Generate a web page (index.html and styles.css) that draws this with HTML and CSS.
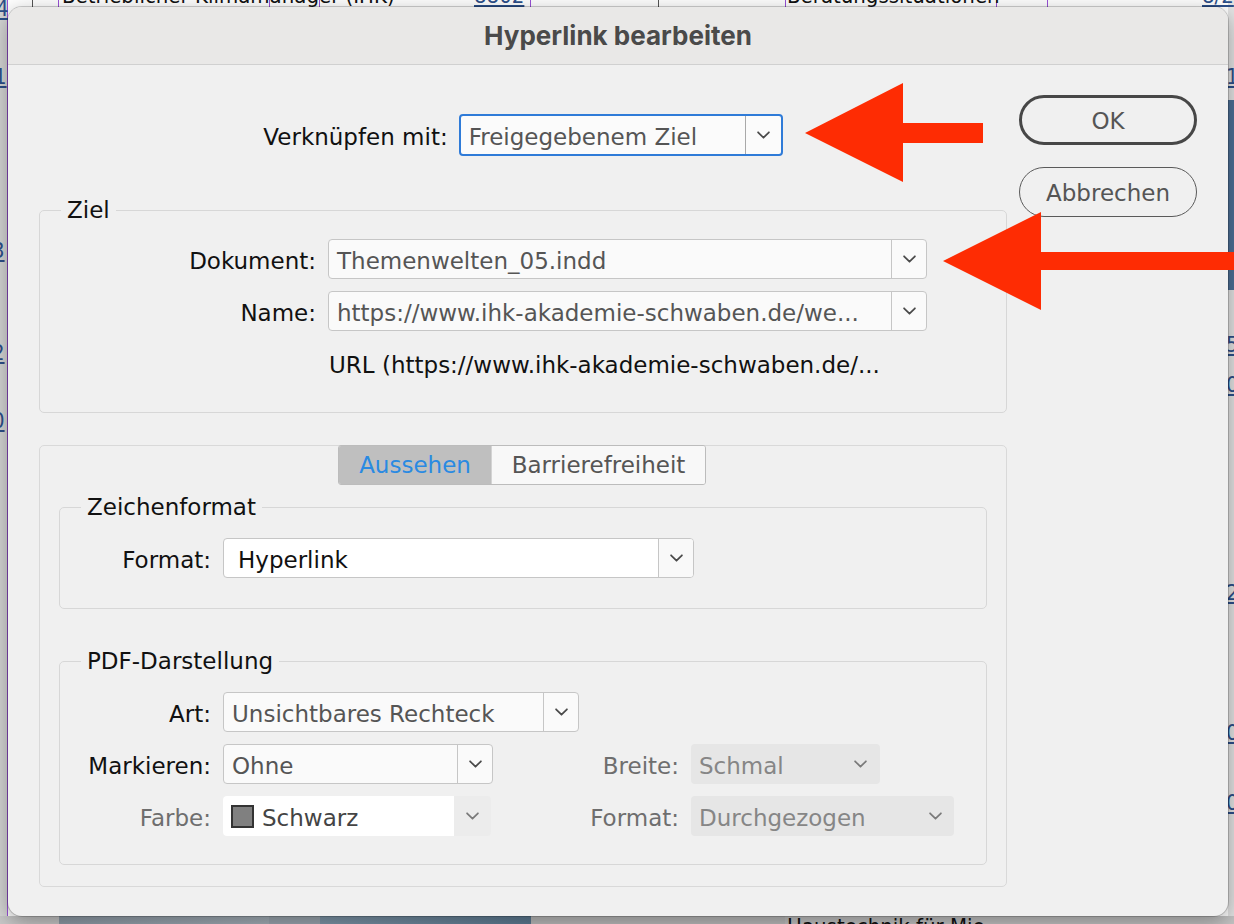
FILE: index.html
```html
<!DOCTYPE html>
<html lang="de">
<head>
<meta charset="utf-8">
<title>Hyperlink bearbeiten</title>
<link rel="stylesheet" href="styles.css">
</head>
<body>
<div class="desktop">
  <div class="bg-left"></div>
  <div class="bg-right"><div class="bg-right-blue"></div></div>
  <div class="vline dark" style="left:32px"></div>
  <div class="vline" style="left:7px"></div>
  <div class="vline" style="left:58px"></div>
  <div class="vline" style="left:269px"></div>
  <div class="vline" style="left:319px"></div>
  <div class="vline" style="left:530px"></div>
  <div class="vline dark" style="left:658px"></div>
  <div class="vline" style="left:785px"></div>
  <div class="vline" style="left:996px"></div>
  <div class="vline" style="left:1047px"></div>
  <span class="doc-text top" style="left:62px">Betrieblicher Klimamanager (IHK)</span>
  <span class="doc-link top" style="left:474px">8802</span>
  <span class="doc-text top" style="left:787px">Beratungssituationen</span>
  <span class="doc-link top" style="left:1202px">8/2</span>
  <span class="doc-link side-digit" style="left:-4px; top:-4px">4</span>
  <span class="doc-link side-digit" style="left:-6px; top:64px">1</span>
  <span class="doc-link side-digit" style="left:-8px; top:238px">3</span>
  <span class="doc-link side-digit" style="left:-8px; top:340px">2</span>
  <span class="doc-link side-digit" style="left:-8px; top:408px">0</span>
  <span class="doc-link side-digit" style="left:1226px; top:64px">1</span>
  <span class="doc-link side-digit" style="left:1226px; top:332px">5</span>
  <span class="doc-link side-digit" style="left:1226px; top:372px">0</span>
  <span class="doc-link side-digit" style="left:1226px; top:580px">2</span>
  <span class="doc-link side-digit" style="left:1226px; top:720px">0</span>
  <span class="doc-link side-digit" style="left:1226px; top:790px">0</span>
  <div class="bottom-strip">
    <div class="bs a"></div><div class="bs b"></div><div class="bs c"></div><div class="bs d"></div><div class="bs e"></div><div class="bs f"><span class="bs-text">Haustechnik für Mie-</span></div>
  </div>
</div>

<div class="dialog">
  <div class="titlebar">Hyperlink bearbeiten</div>
  <div class="dialog-body">
    <div class="main">
      <div class="link-row">
        <span class="label">Verknüpfen mit:</span>
        <div class="select focus w-link">
          <span class="val">Freigegebenem Ziel</span>
          <span class="btn"><svg class="chev" viewBox="0 0 12 7"><path d="M1 1 L6 6 L11 1"/></svg></span>
        </div>
      </div>

      <fieldset class="group ziel">
        <legend>Ziel</legend>
        <div class="form-grid ziel-grid">
          <span class="label">Dokument:</span>
          <div class="select w-doc">
            <span class="val">Themenwelten_05.indd</span>
            <span class="btn"><svg class="chev" viewBox="0 0 12 7"><path d="M1 1 L6 6 L11 1"/></svg></span>
          </div>
          <span class="label">Name:</span>
          <div class="select w-doc">
            <span class="val">https://www.ihk-akademie-schwaben.de/we...</span>
            <span class="btn"><svg class="chev" viewBox="0 0 12 7"><path d="M1 1 L6 6 L11 1"/></svg></span>
          </div>
          <span class="url">URL (https://www.ihk-akademie-schwaben.de/...</span>
        </div>
      </fieldset>

      <div class="appearance">
        <div class="tabs-row">
          <div class="tabs">
            <span class="tab active">Aussehen</span>
            <span class="tab">Barrierefreiheit</span>
          </div>
        </div>

        <fieldset class="group zeichen">
          <legend>Zeichenformat</legend>
          <div class="form-grid inner-grid">
            <span class="label">Format:</span>
            <div class="select white w-format">
              <span class="val dark">Hyperlink</span>
              <span class="btn"><svg class="chev" viewBox="0 0 12 7"><path d="M1 1 L6 6 L11 1"/></svg></span>
            </div>
          </div>
        </fieldset>

        <fieldset class="group pdf">
          <legend>PDF-Darstellung</legend>
          <div class="pdf-grid">
            <span class="label">Art:</span>
            <div class="select w-art">
              <span class="val">Unsichtbares Rechteck</span>
              <span class="btn"><svg class="chev" viewBox="0 0 12 7"><path d="M1 1 L6 6 L11 1"/></svg></span>
            </div>
            <span></span><span></span>

            <span class="label">Markieren:</span>
            <div class="select w-mark">
              <span class="val">Ohne</span>
              <span class="btn"><svg class="chev" viewBox="0 0 12 7"><path d="M1 1 L6 6 L11 1"/></svg></span>
            </div>
            <span class="label muted">Breite:</span>
            <div class="select disabled w-breite">
              <span class="val">Schmal</span>
              <span class="btn plain"><svg class="chev light" viewBox="0 0 12 7"><path d="M1 1 L6 6 L11 1"/></svg></span>
            </div>

            <span class="label muted">Farbe:</span>
            <div class="select farbe w-farbe">
              <span class="val"><span class="swatch"></span>Schwarz</span>
              <span class="btn plain"><svg class="chev light" viewBox="0 0 12 7"><path d="M1 1 L6 6 L11 1"/></svg></span>
            </div>
            <span class="label muted">Format:</span>
            <div class="select disabled w-stil">
              <span class="val">Durchgezogen</span>
              <span class="btn plain"><svg class="chev light" viewBox="0 0 12 7"><path d="M1 1 L6 6 L11 1"/></svg></span>
            </div>
          </div>
        </fieldset>
      </div>
    </div>

    <div class="side">
      <button class="pill ok">OK</button>
      <button class="pill cancel">Abbrechen</button>
    </div>
  </div>
</div>

<svg class="arrows" viewBox="0 0 1234 924" width="1234" height="924">
  <polygon points="805,133 903,83 903,123 983,123 983,143 903,143 903,182"/>
  <polygon points="943,261 1041,212 1041,252 1234,252 1234,270 1041,270 1041,310"/>
</svg>
</body>
</html>
```

FILE: styles.css
```css
* { box-sizing: border-box; }
html, body { margin: 0; padding: 0; }
body {
  width: 1234px;
  height: 924px;
  overflow: hidden;
  position: relative;
  background: #ffffff;
  font-family: "DejaVu Sans", "Noto Sans", sans-serif;
}

/* ---------- background document (free canvas) ---------- */
.desktop { position: absolute; inset: 0; background: #ffffff; overflow: hidden; }
.bg-left { position: absolute; left: 0; top: 0; width: 7px; height: 924px; background: #d6d6d6; }
.bg-right { position: absolute; left: 1228px; top: 0; width: 6px; height: 924px; background: #e4e4e4; }
.bg-right-blue { position: absolute; left: 0; top: 100px; width: 6px; height: 190px; background: #4d6f96; }
.vline { position: absolute; top: 0; width: 1px; height: 924px; background: #9a52d8; }
.vline.dark { background: #555; }
.doc-text, .doc-link {
  position: absolute;
  font-family: "DejaVu Sans", sans-serif;
  font-stretch: condensed;
  font-size: 22px;
  line-height: 26px;
  white-space: nowrap;
}
.doc-text { color: #111; }
.doc-link { color: #2c4f8a; text-decoration: underline; }
.doc-text.top, .doc-link.top { top: -17px; }
.side-digit { font-size: 22px; }
.bottom-strip { position: absolute; left: 0; top: 916px; width: 1234px; height: 8px; display: flex; }
.bs { height: 8px; }
.bs.a { width: 59px; background: #c9c9c9; }
.bs.b { width: 210px; background: linear-gradient(90deg, #8f9ca8, #a5b0b9); }
.bs.c { width: 51px; background: #9ca7b1; }
.bs.d { width: 211px; background: linear-gradient(90deg, #7f97aa, #5d7b93); }
.bs.e { width: 254px; background: #bdbdbd; }
.bs.f { flex: 1; background: #c4c4c4; position: relative; overflow: hidden; }
.bs-text { position: absolute; left: 2px; top: -2px; font-size: 22px; font-stretch: condensed; color: #111; white-space: nowrap; line-height: 26px; }

/* ---------- dialog window ---------- */
.dialog {
  position: absolute;
  left: 8px;
  top: 7px;
  width: 1220px;
  height: 909px;
  background: #f0f0f0;
  border-radius: 14px;
  box-shadow: 0 0 0 1px rgba(0,0,0,0.18), 0 6px 22px rgba(0,0,0,0.35);
  overflow: hidden;
  display: flex;
  flex-direction: column;
}
.titlebar {
  flex: none;
  height: 58px;
  background: #e9e8e7;
  border-bottom: 1px solid #d0d0d0;
  display: flex;
  align-items: center;
  justify-content: center;
  font-family: Inter, Roboto, "Liberation Sans", sans-serif;
  font-weight: 700;
  font-size: 26px;
  color: #4a4a4a;
}
.dialog-body { display: flex; padding-left: 31px; flex: 1; }
.main { width: 968px; display: flex; flex-direction: column; }
.side { margin-left: 12px; width: 178px; padding-top: 30px; display: flex; flex-direction: column; gap: 22px; }

.label { font-size: 23px; color: #111; white-space: nowrap; justify-self: end; padding-top: 4px; }
.label.muted { color: #6e6e6e; }

.link-row { margin-top: 49px; height: 42px; display: flex; justify-content: center; align-items: center; gap: 11px; }

/* ---------- selects ---------- */
.select {
  display: flex;
  height: 40px;
  border: 1px solid #c6c6c6;
  border-radius: 4px;
  background: #fafafa;
  overflow: hidden;
}
.select .val {
  flex: 1;
  min-width: 0;
  display: flex;
  align-items: center;
  padding-left: 8px;
  padding-top: 4px;
  font-size: 23px;
  color: #555;
  white-space: nowrap;
  overflow: hidden;
}
.select .val.dark { color: #111; padding-left: 14px; }
.select .btn {
  flex: none;
  width: 35px;
  border-left: 1px solid #c6c6c6;
  display: flex;
  align-items: center;
  justify-content: center;
}
.select .btn.plain { border-left: none; }
.chev { width: 13px; height: 8px; fill: none; stroke: #4a4a4a; stroke-width: 1.6; stroke-linecap: round; stroke-linejoin: round; }
.chev.light { stroke: #7a7a7a; }

.select.focus { height: 42px; border: 2px solid #2f7bd8; background: #fbfbfb; }
.select.focus .btn { width: 36px; border-left-color: #a9a9a9; }
.select.white { background: #ffffff; }
.select.white .btn { background: #f9f9f9; }
.select.disabled { border: none; background: #e6e6e6; }
.select.disabled .val { color: #868686; }
.select.farbe { border: none; background: #ececec; }
.select.farbe .val { background: #ffffff; color: #444; }
.select.farbe .btn { width: 37px; }
.swatch { width: 23px; height: 23px; background: #808080; border: 2px solid #333; margin-right: 8px; margin-top: -4px; flex: none; }

.w-link { width: 324px; }
.w-doc { width: 599px; }
.w-format { width: 471px; }
.w-art { width: 356px; }
.w-mark { width: 270px; }
.w-farbe { width: 268px; }
.w-breite { width: 189px; }
.w-breite .btn { width: 40px; }
.w-stil { width: 263px; }
.w-stil .btn { width: 38px; }

/* ---------- groups ---------- */
fieldset.group {
  margin: 0;
  min-width: 0;
  border: 1px solid #d7d7d7;
  border-radius: 5px;
}
fieldset.group legend {
  padding: 0 6px;
  margin-left: 21px;
  font-size: 23px;
  line-height: 26px;
  color: #111;
}
fieldset.ziel { margin-top: 41px; padding: 16px 0 34px 0; }
.form-grid { display: grid; column-gap: 12px; row-gap: 12px; align-items: center; }
.ziel-grid { grid-template-columns: 276px 599px; }
.url { grid-column: 2; margin-top: 9px; font-size: 23px; line-height: 26px; color: #111; white-space: nowrap; padding-left: 1px; }

.appearance {
  margin-top: 32px;
  border: 1px solid #d9d9d9;
  border-radius: 5px;
  padding: 0 19px 21px 19px;
}
.tabs-row { display: flex; justify-content: center; margin-top: -1px; padding-right: 2px; }
.tabs { display: flex; height: 40px; border: 1px solid #bcbcbc; border-radius: 3px; overflow: hidden; }
.tab { display: flex; align-items: center; justify-content: center; font-size: 23px; }
.tab.active { width: 152px; background: #bfbfbf; color: #2a8ae2; }
.tab:not(.active) { width: 214px; background: #f8f8f8; color: #555; border-left: 1px solid #d4d4d4; }

fieldset.zeichen { margin-top: 9px; padding: 18px 0 30px 0; }
.inner-grid { grid-template-columns: 151px 471px; }

fieldset.pdf { margin-top: 39px; padding: 18px 0 28px 0; }
.pdf-grid {
  display: grid;
  grid-template-columns: 151px 356px 88px 263px;
  column-gap: 12px;
  row-gap: 12px;
  align-items: center;
}

/* ---------- buttons ---------- */
.pill {
  height: 50px;
  border-radius: 25px;
  background: transparent;
  font-family: "DejaVu Sans", sans-serif;
  font-size: 23px;
  color: #555;
  padding: 2px 0 0 0;
}
.pill.ok { border: 3px solid #474747; }
.pill.cancel { border: 1.5px solid #5a5a5a; }

/* ---------- annotation arrows ---------- */
.arrows { position: absolute; left: 0; top: 0; pointer-events: none; }
.arrows polygon { fill: #fe2c03; }
```
